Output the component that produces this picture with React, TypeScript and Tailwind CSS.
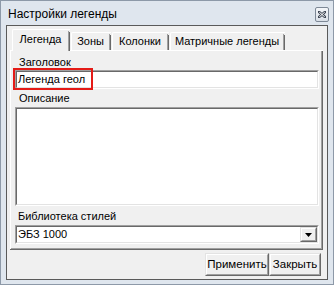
import React from 'react';

function Raised({ className, children }: { className?: string; children?: React.ReactNode }) {
  return (
    <div className={`border border-t-[#e3e3e3] border-l-[#e3e3e3] border-r-[#696969] border-b-[#696969] bg-[#f0f0f0] ${className ?? ''}`}>
      <div className="h-full w-full border border-t-white border-l-white border-r-[#a0a0a0] border-b-[#a0a0a0] flex items-center justify-center">
        {children}
      </div>
    </div>
  );
}

function Sunken({ className, children }: { className?: string; children?: React.ReactNode }) {
  return (
    <div className={`border border-t-[#a0a0a0] border-l-[#a0a0a0] border-r-white border-b-white ${className ?? ''}`}>
      <div className="h-full w-full border border-t-[#696969] border-l-[#696969] border-r-[#e3e3e3] border-b-[#e3e3e3] bg-white flex items-center">
        {children}
      </div>
    </div>
  );
}

const TABS = [
  { label: 'Зоны', w: 'w-[40px]' },
  { label: 'Колонки', w: 'w-[57px]' },
  { label: 'Матричные легенды', w: 'w-[115px]' },
];

export default function App() {
  return (
    <div className="w-[334px] h-[285px] flex flex-col border border-[#8d99a8] bg-[#dfe6ee] font-['Liberation_Sans',Arial,sans-serif] text-[11px] text-black leading-none">
      {/* Title bar */}
      <div className="h-[24px] flex items-start justify-between pl-[7px] pr-[4px]">
        <span className="text-[12px] mt-[7px]">Настройки легенды</span>
        <div className="mt-[6px] w-[14px] h-[15px] rounded-[2px] border border-[#7d8896] bg-gradient-to-b from-[#f4f6f9] to-[#d9dfe7] flex items-center justify-center">
          <svg width="8" height="7" viewBox="0 0 8 7">
            <path d="M1 1 L7 6 M7 1 L1 6" stroke="#3c4452" strokeWidth="2.6" strokeLinecap="square" />
            <path d="M1.3 1.2 L6.7 5.8 M6.7 1.2 L1.3 5.8" stroke="#ffffff" strokeWidth="1" />
          </svg>
        </div>
      </div>

      {/* Client area */}
      <div className="flex-1 mx-[5px] mb-[4px] border border-[#5a5a5a] bg-[#f0f0f0] flex flex-col pl-[3px] pr-[4px] pt-[3px]">
        {/* Tabs */}
        <div className="h-[21px] flex items-end pl-[2px]">
          <div className="relative z-10 -mb-px w-[58px] h-[22px] bg-[#f0f0f0] border-l border-t border-white rounded-tl-[2px] flex">
            <div className="flex-1 flex items-center justify-center pb-[2px]">Легенда</div>
            <div className="w-px bg-[#a0a0a0] mt-px" />
            <div className="w-px bg-[#696969] mt-[2px]" />
          </div>
          {TABS.map((t) => (
            <div key={t.label} className={`${t.w} h-[18px] ml-px border-l border-t border-white rounded-tl-[2px] flex`}>
              <div className="flex-1 flex items-center justify-center whitespace-nowrap">{t.label}</div>
              <div className="w-px bg-[#a0a0a0] mt-px" />
              <div className="w-px bg-[#696969] mt-[2px]" />
            </div>
          ))}
        </div>

        {/* Tab page */}
        <div className="h-[200px] border-l border-t border-white flex">
          <div className="flex-1 flex flex-col pl-[4px] pr-[2px] pt-[4px]">
            <div className="h-[14px] flex items-center pl-[4px]">Заголовок</div>
            <div className="relative mt-px">
              <Sunken className="h-[19px]">
                <span className="pl-[1px]">Легенда геол</span>
              </Sunken>
              <div className="absolute -left-[2px] -top-[2px] w-[80px] h-[22px] border-2 border-[#e41b17]" />
            </div>
            <div className="h-[14px] mt-[2px] flex items-center pl-[4px]">Описание</div>
            <Sunken className="h-[99px] mt-[2px]" />
            <div className="h-[14px] mt-[3px] flex items-center pl-[3px]">Библиотека стилей</div>
            <Sunken className="h-[19px] mt-[2px]">
              <span className="flex-1 pl-[1px]">ЭБЗ 1000</span>
              <Raised className="w-[17px] h-[15px]">
                <svg width="7" height="4" viewBox="0 0 7 4">
                  <polygon points="0,0 7,0 3.5,4" fill="#000" />
                </svg>
              </Raised>
            </Sunken>
          </div>
          <div className="w-px bg-[#a0a0a0] mb-px" />
          <div className="w-px bg-[#696969]" />
        </div>
        <div className="h-px bg-[#a0a0a0] -mt-[2px] mr-[2px] ml-px" />
        <div className="h-px bg-[#696969] mr-px" />

        {/* Buttons */}
        <div className="mt-[3px] h-[23px] flex justify-end mr-[2px]">
          <Raised className="w-[64px] h-[23px] text-[11.5px]">Применить</Raised>
          <Raised className="w-[52px] h-[23px] text-[11.5px]">Закрыть</Raised>
        </div>
      </div>
    </div>
  );
}
